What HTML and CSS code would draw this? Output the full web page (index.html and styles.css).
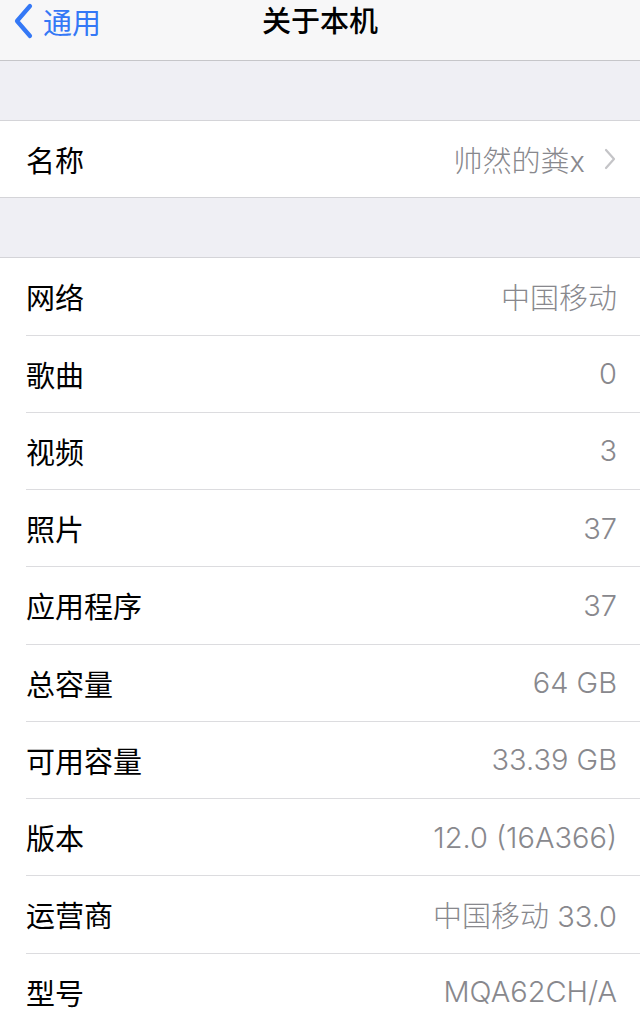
FILE: index.html
```html
<!DOCTYPE html>
<html lang="zh-CN">
<head>
  <meta charset="UTF-8" />
  <meta name="viewport" content="width=device-width, initial-scale=1.0"/>
  <title>关于本机</title>
  <link rel="stylesheet" href="styles.css">
</head>
<body>
  <header class="navbar">
    <a class="back" href="#">
      <svg class="back-icon" width="22" height="38" viewBox="0 0 22 38">
        <path d="M18 4 L5 19 L18 34" fill="none" stroke="#3478f6" stroke-width="4.2" stroke-linecap="round" stroke-linejoin="round"/>
      </svg>
      <span>通用</span>
    </a>
    <h1 class="title">关于本机</h1>
  </header>

  <div class="spacer"></div>

  <section class="group">
    <div class="row">
      <span class="label">名称</span>
      <span class="value">帅然的粪x</span>
      <svg class="chevron" width="14" height="22" viewBox="0 0 14 22">
        <path d="M3 2 L11 11 L3 20" fill="none" stroke="#c4c4c7" stroke-width="2.2" stroke-linecap="round" stroke-linejoin="round"/>
      </svg>
    </div>
  </section>

  <div class="spacer"></div>

  <section class="group">
    <div class="row"><span class="label">网络</span><span class="value">中国移动</span></div>
    <div class="row"><span class="label">歌曲</span><span class="value">0</span></div>
    <div class="row"><span class="label">视频</span><span class="value">3</span></div>
    <div class="row"><span class="label">照片</span><span class="value">37</span></div>
    <div class="row"><span class="label">应用程序</span><span class="value">37</span></div>
    <div class="row"><span class="label">总容量</span><span class="value">64 GB</span></div>
    <div class="row"><span class="label">可用容量</span><span class="value">33.39 GB</span></div>
    <div class="row"><span class="label">版本</span><span class="value">12.0 (16A366)</span></div>
    <div class="row"><span class="label">运营商</span><span class="value">中国移动 33.0</span></div>
    <div class="row"><span class="label">型号</span><span class="value">MQA62CH/A</span></div>
  </section>
</body>
</html>
```

FILE: styles.css
```css
body {
  margin: 0;
  background-color: #efeff4;
  font-family: Inter, "Noto Sans CJK SC", sans-serif;
  color: #000;
  overflow: hidden;
}
.navbar {
  position: relative;
  height: 60px;
  background-color: #f7f7f8;
  border-bottom: 1px solid #c6c6c9;
  display: flex;
  align-items: center;
  justify-content: center;
}
.back {
  position: absolute;
  left: 12px;
  top: 0;
  display: flex;
  align-items: center;
  gap: 9px;
  color: #3478f6;
  text-decoration: none;
  font-size: 29px;
}
.title {
  margin: 0 0 22px 0;
  font-size: 29px;
  font-weight: 500;
}
.spacer {
  height: 59px;
  border-bottom: 1px solid #d4d4d8;
}
.group {
  background-color: #fff;
  border-bottom: 1px solid #d4d4d8;
}
.row {
  height: 76.25px;
  margin-left: 26px;
  padding-right: 23px;
  display: flex;
  align-items: center;
  border-bottom: 1px solid #dcdcdf;
  font-size: 29px;
}
.row:last-child {
  border-bottom: none;
}
.label {
  flex: 1;
}
.value {
  color: #88888d;
  font-weight: 300;
}
.chevron {
  margin-left: 18px;
  margin-right: 0;
}
```
